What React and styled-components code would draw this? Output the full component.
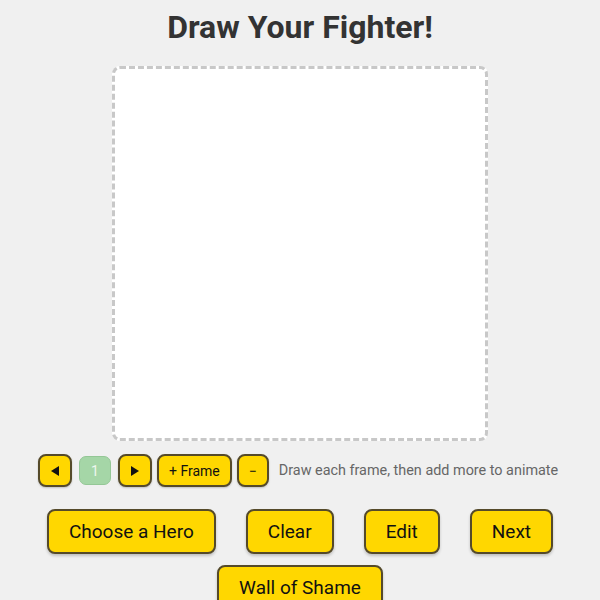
import styled, { createGlobalStyle } from 'styled-components'

const GlobalStyle = createGlobalStyle`
  body {
    margin: 0;
    background: #f0f0f0;
    font-family: Roboto, "Liberation Sans", sans-serif;
  }
`;

const Page = styled.div`
  display: flex;
  flex-direction: column;
  align-items: center;
  padding-top: 10px;
`;

const Title = styled.h1`
  margin: 0 0 22px;
  font-size: 32px;
  line-height: 34px;
  font-weight: 700;
  color: #333;
`;

const Canvas = styled.div`
  width: 370px;
  height: 369px;
  background: #fff;
  border: 3px dashed #c8c8c8;
  border-radius: 8px;
`;

const FrameBar = styled.div`
  display: flex;
  align-items: center;
  gap: 5px;
  margin-top: 13px;
  width: 524px;
`;

const SmallButton = styled.button`
  height: 33px;
  min-width: ${(p) => p.w || 34}px;
  padding: 0 10px;
  background: #ffd700;
  border: 2px solid #554a2a;
  border-radius: 8px;
  font-family: inherit;
  font-size: 14px;
  color: #111;
  box-shadow: 0 1px 2px rgba(0, 0, 0, 0.2);
  display: flex;
  align-items: center;
  justify-content: center;
`;

const FrameChip = styled.div`
  width: 30px;
  height: 27px;
  margin: 0 2px;
  background: #a5d6a7;
  border: 1px solid #94c796;
  border-radius: 7px;
  color: #eef6ee;
  font-size: 14px;
  display: flex;
  align-items: center;
  justify-content: center;
`;

const Hint = styled.span`
  margin-left: 5px;
  font-size: 14.4px;
  color: #666;
`;

const Actions = styled.div`
  display: flex;
  flex-wrap: wrap;
  justify-content: center;
  column-gap: 30px;
  row-gap: 11px;
  margin-top: 22px;
  width: 560px;
`;

const ActionButton = styled.button`
  height: 45px;
  padding: 0 20px;
  background: #ffd700;
  border: 2px solid #554a2a;
  border-radius: 8px;
  font-family: inherit;
  font-size: 19px;
  color: #111;
  box-shadow: 0 2px 3px rgba(0, 0, 0, 0.2);
`;

const Arrow = ({ dir }) => (
  <svg width="10" height="12" viewBox="0 0 10 12">
    {dir === 'left'
      ? <polygon points="9,1 9,11 1,6" fill="#111" />
      : <polygon points="1,1 1,11 9,6" fill="#111" />}
  </svg>
);

const App = () => {
  return (
    <Page>
      <GlobalStyle />
      <Title>Draw Your Fighter!</Title>
      <Canvas />
      <FrameBar>
        <SmallButton><Arrow dir="left" /></SmallButton>
        <FrameChip>1</FrameChip>
        <SmallButton><Arrow dir="right" /></SmallButton>
        <SmallButton w={74}>+ Frame</SmallButton>
        <SmallButton w={31}>−</SmallButton>
        <Hint>Draw each frame, then add more to animate</Hint>
      </FrameBar>
      <Actions>
        <ActionButton>Choose a Hero</ActionButton>
        <ActionButton>Clear</ActionButton>
        <ActionButton>Edit</ActionButton>
        <ActionButton>Next</ActionButton>
        <ActionButton>Wall of Shame</ActionButton>
      </Actions>
    </Page>
  )
}

export default App
